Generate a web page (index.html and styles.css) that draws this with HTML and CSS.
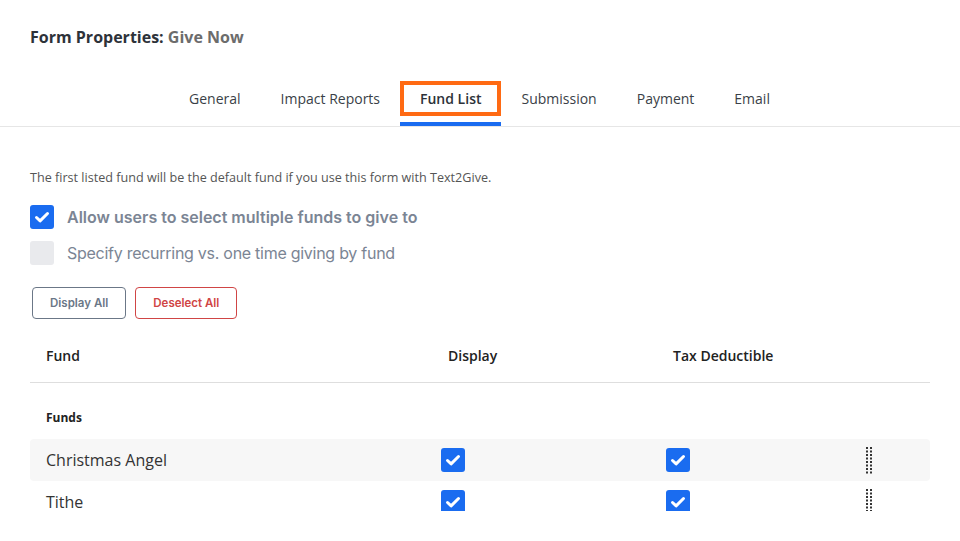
FILE: index.html
```html
<!DOCTYPE html>
<html lang="en">
<head>
  <meta charset="UTF-8" />
  <meta name="viewport" content="width=device-width, initial-scale=1.0"/>
  <title>Form Properties: Give Now</title>
  <link rel="stylesheet" href="styles.css">
</head>
<body>
  <h1 class="page-title">Form Properties: <span>Give Now</span></h1>

  <nav class="tabs">
    <a class="tab"><span class="tab-label">General</span></a>
    <a class="tab"><span class="tab-label">Impact Reports</span></a>
    <a class="tab active"><span class="tab-label">Fund List</span></a>
    <a class="tab"><span class="tab-label">Submission</span></a>
    <a class="tab"><span class="tab-label">Payment</span></a>
    <a class="tab"><span class="tab-label">Email</span></a>
  </nav>

  <main class="panel">
    <p class="hint">The first listed fund will be the default fund if you use this form with Text2Give.</p>

    <label class="option">
      <span class="box checked">
        <svg viewBox="0 0 24 24" width="24" height="24"><path d="M6.5 12.5l3.6 3.4 7.4-7.4" fill="none" stroke="#fff" stroke-width="3" stroke-linecap="round" stroke-linejoin="round"/></svg>
      </span>
      <span class="option-text strong">Allow users to select multiple funds to give to</span>
    </label>
    <label class="option">
      <span class="box"></span>
      <span class="option-text">Specify recurring vs. one time giving by fund</span>
    </label>

    <div class="actions">
      <button class="btn btn-slate">Display All</button>
      <button class="btn btn-red">Deselect All</button>
    </div>

    <div class="fund-table">
      <div class="fund-head">
        <div>Fund</div>
        <div class="col-check">Display</div>
        <div class="col-check">Tax Deductible</div>
        <div></div>
      </div>

      <div class="group-label">Funds</div>

      <div class="fund-row shaded">
        <div class="fund-name">Christmas Angel</div>
        <div><span class="box checked"><svg viewBox="0 0 24 24" width="24" height="24"><path d="M6.5 12.5l3.6 3.4 7.4-7.4" fill="none" stroke="#fff" stroke-width="3" stroke-linecap="round" stroke-linejoin="round"/></svg></span></div>
        <div><span class="box checked"><svg viewBox="0 0 24 24" width="24" height="24"><path d="M6.5 12.5l3.6 3.4 7.4-7.4" fill="none" stroke="#fff" stroke-width="3" stroke-linecap="round" stroke-linejoin="round"/></svg></span></div>
        <div class="handle">
          <svg viewBox="0 0 8 27" width="8" height="27" fill="#333">
            <rect x="0" y="0" width="2" height="2"/><rect x="4" y="0" width="2" height="2"/>
            <rect x="0" y="3.5" width="2" height="2"/><rect x="4" y="3.5" width="2" height="2"/>
            <rect x="0" y="7" width="2" height="2"/><rect x="4" y="7" width="2" height="2"/>
            <rect x="0" y="10.5" width="2" height="2"/><rect x="4" y="10.5" width="2" height="2"/>
            <rect x="0" y="14" width="2" height="2"/><rect x="4" y="14" width="2" height="2"/>
            <rect x="0" y="17.5" width="2" height="2"/><rect x="4" y="17.5" width="2" height="2"/>
            <rect x="0" y="21" width="2" height="2"/><rect x="4" y="21" width="2" height="2"/>
            <rect x="0" y="24.5" width="2" height="2"/><rect x="4" y="24.5" width="2" height="2"/>
          </svg>
        </div>
      </div>

      <div class="fund-row">
        <div class="fund-name">Tithe</div>
        <div><span class="box checked"><svg viewBox="0 0 24 24" width="24" height="24"><path d="M6.5 12.5l3.6 3.4 7.4-7.4" fill="none" stroke="#fff" stroke-width="3" stroke-linecap="round" stroke-linejoin="round"/></svg></span></div>
        <div><span class="box checked"><svg viewBox="0 0 24 24" width="24" height="24"><path d="M6.5 12.5l3.6 3.4 7.4-7.4" fill="none" stroke="#fff" stroke-width="3" stroke-linecap="round" stroke-linejoin="round"/></svg></span></div>
        <div class="handle">
          <svg viewBox="0 0 8 27" width="8" height="27" fill="#333">
            <rect x="0" y="0" width="2" height="2"/><rect x="4" y="0" width="2" height="2"/>
            <rect x="0" y="3.5" width="2" height="2"/><rect x="4" y="3.5" width="2" height="2"/>
            <rect x="0" y="7" width="2" height="2"/><rect x="4" y="7" width="2" height="2"/>
            <rect x="0" y="10.5" width="2" height="2"/><rect x="4" y="10.5" width="2" height="2"/>
            <rect x="0" y="14" width="2" height="2"/><rect x="4" y="14" width="2" height="2"/>
            <rect x="0" y="17.5" width="2" height="2"/><rect x="4" y="17.5" width="2" height="2"/>
            <rect x="0" y="21" width="2" height="2"/><rect x="4" y="21" width="2" height="2"/>
            <rect x="0" y="24.5" width="2" height="2"/><rect x="4" y="24.5" width="2" height="2"/>
          </svg>
        </div>
      </div>
    </div>
  </main>
</body>
</html>
```

FILE: styles.css
```css
body {
  margin: 0;
  height: 541px;
  overflow: hidden;
  background: #fff;
  color: #333;
  font-family: "Open Sans", "Liberation Sans", sans-serif;
}

.page-title {
  margin: 0;
  padding: 26px 30px 0;
  font-size: 16px;
  line-height: 22px;
  font-weight: 700;
  color: #2d3239;
}

.page-title span {
  color: #6c6c6c;
}

/* tab strip */
.tabs {
  display: flex;
  justify-content: center;
  margin-top: 33px;
  padding-right: 1px;
  border-bottom: 1px solid #e6e6e6;
}

.tab {
  padding-bottom: 6px;
  border-bottom: 4px solid transparent;
  cursor: pointer;
}

.tab-label {
  display: block;
  padding: 4px 16px;
  border: 4px solid transparent;
  font-size: 14px;
  line-height: 19px;
  color: #3a3f47;
}

.tab.active {
  border-bottom-color: #1a6cf0;
}

.tab.active .tab-label {
  border-color: #ff6a13;
  font-weight: 600;
  color: #2d3239;
}

/* content */
.panel {
  height: 384px;
  overflow: hidden;
  padding: 0 30px;
}

.hint {
  margin: 42px 0 12px;
  font-size: 12.6px;
  line-height: 18px;
  color: #555;
}

.option {
  display: flex;
  align-items: center;
  height: 36px;
  gap: 13px;
}

.option-text {
  font-family: "Inter", "Open Sans", sans-serif;
  font-size: 16px;
  letter-spacing: -0.27px;
  color: #7b8594;
}

.option-text.strong {
  font-weight: 600;
  letter-spacing: 0;
}

.box {
  display: inline-block;
  width: 24px;
  height: 24px;
  border-radius: 3px;
  background: #e9eaed;
  flex-shrink: 0;
}

.box.checked {
  background: #1a6cf0;
}

.box svg {
  display: block;
}

.actions {
  display: flex;
  gap: 9px;
  margin: 16px 0 0 2px;
}

.btn {
  height: 32px;
  padding: 0 17px;
  background: #fff;
  border-radius: 4px;
  font-family: "Inter", "Open Sans", sans-serif;
  font-size: 11.5px;
  font-weight: 600;
  cursor: pointer;
}

.btn-slate {
  border: 1px solid #6b7787;
  color: #6b7787;
}

.btn-red {
  border: 1px solid #d04545;
  color: #d04545;
}

/* fund grid */
.fund-head,
.fund-row {
  display: grid;
  grid-template-columns: 411px 225px 200px 1fr;
  align-items: center;
}

.fund-head {
  margin-top: 15px;
  padding-bottom: 4px;
  line-height: 44px;
  border-bottom: 1px solid #dedede;
  font-size: 14px;
  font-weight: 600;
  color: #222;
}

.fund-head > div:first-child,
.fund-name {
  padding-left: 16px;
}

.col-check {
  padding-left: 7px;
}

.group-label {
  margin: 26px 0 12px 16px;
  font-size: 12px;
  line-height: 18px;
  font-weight: 700;
  color: #222;
}

.fund-row {
  height: 42px;
  border-radius: 4px;
}

.fund-row.shaded {
  background: #f7f7f7;
}

.fund-row > div {
  display: flex;
  align-items: center;
}

.fund-name {
  font-size: 16px;
  color: #333;
}

.handle svg {
  display: block;
}
```
